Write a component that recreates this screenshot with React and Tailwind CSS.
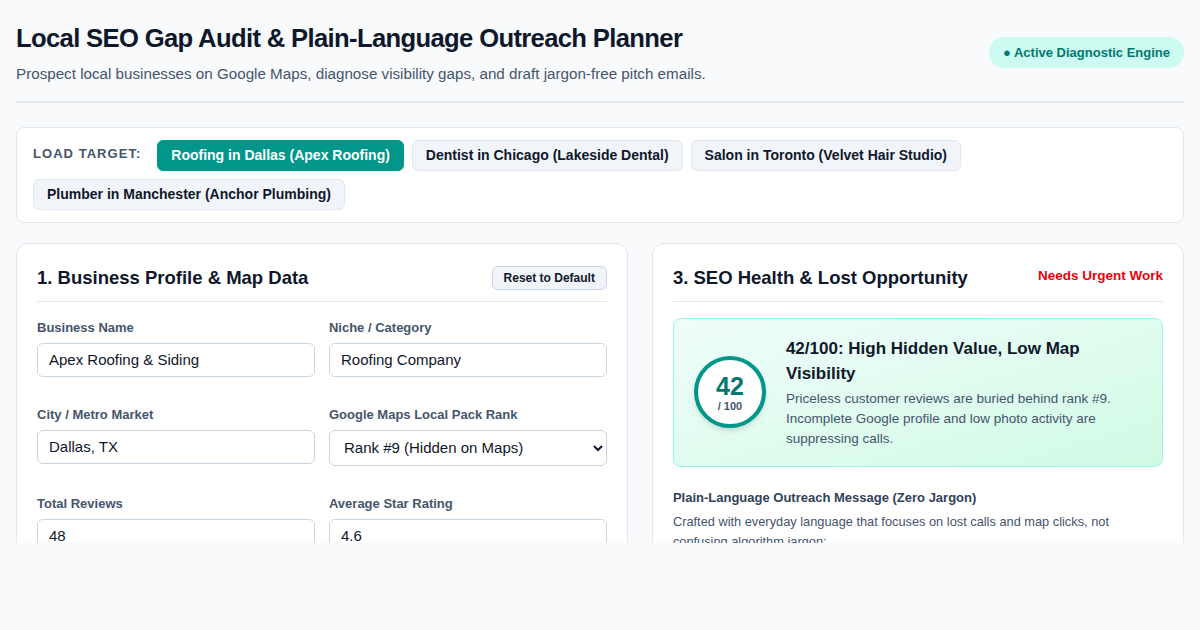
import React, { useState } from "react";

const targets = [
    "Roofing in Dallas (Apex Roofing)",
    "Dentist in Chicago (Lakeside Dental)",
    "Salon in Toronto (Velvet Hair Studio)",
    "Plumber in Manchester (Anchor Plumbing)",
];

const Field = ({ label, children }) => (
    <div className="flex flex-col">
        <label className="text-[13px] font-bold text-slate-600 mb-[7px] leading-4">{label}</label>
        {children}
    </div>
);

const inputCls = "h-[34px] border border-slate-300 rounded-md px-[11px] text-[15px] text-slate-900 bg-white outline-none";

const App = () => {
    const [activo, setActivo] = useState(0);

    return (
        <div className="min-h-[630px] bg-slate-50 font-['Liberation_Sans',Arial,sans-serif]">
            <div className="h-[543px] overflow-hidden px-4 pt-[22px]">
                <header className="flex items-center justify-between pb-[15px] border-b-2 border-slate-200">
                    <div>
                        <h1 className="text-[25.6px] leading-8 font-bold tracking-tight text-slate-900">
                            Local SEO Gap Audit &amp; Plain-Language Outreach Planner
                        </h1>
                        <p className="text-[15.2px] text-slate-600 mt-[9px]">
                            Prospect local businesses on Google Maps, diagnose visibility gaps, and draft jargon-free pitch emails.
                        </p>
                    </div>
                    <span className="bg-teal-100 text-teal-700 text-[13px] font-bold rounded-full px-[14px] h-[31px] flex items-center mb-[3px]">
                        ● Active Diagnostic Engine
                    </span>
                </header>

                <section className="mt-6 bg-white border border-slate-200 rounded-lg px-4 py-3 flex flex-wrap items-center gap-2">
                    <span className="text-[13px] font-bold uppercase tracking-[0.08em] text-slate-600 mr-2 -mt-[3px]">Load Target:</span>
                    {targets.map((t, i) => (
                        <button
                            key={t}
                            onClick={() => setActivo(i)}
                            className={
                                i === activo
                                    ? "h-[31px] px-[13px] rounded-md text-[14px] font-bold bg-teal-600 text-white border border-teal-600"
                                    : "h-[31px] px-[13px] rounded-md text-[14px] font-bold bg-slate-100 text-slate-900 border border-slate-200"
                            }
                        >
                            {t}
                        </button>
                    ))}
                </section>

                <div className="mt-5 grid grid-cols-[1.15fr_1fr] gap-6">
                    <div className="bg-white border border-slate-200 rounded-xl p-5 pb-8">
                        <div className="flex items-center justify-between pb-[9px] border-b border-slate-200">
                            <h2 className="text-[18.5px] font-bold text-slate-900 leading-7">1. Business Profile &amp; Map Data</h2>
                            <button className="h-6 px-[11px] bg-slate-100 border border-slate-300 rounded-md text-[12px] font-bold text-slate-900">
                                Reset to Default
                            </button>
                        </div>
                        <div className="grid grid-cols-2 gap-x-[14px] gap-y-[30px] mt-[18px]">
                            <Field label="Business Name">
                                <input className={inputCls} defaultValue="Apex Roofing & Siding" />
                            </Field>
                            <Field label="Niche / Category">
                                <input className={inputCls} defaultValue="Roofing Company" />
                            </Field>
                            <Field label="City / Metro Market">
                                <input className={inputCls} defaultValue="Dallas, TX" />
                            </Field>
                            <Field label="Google Maps Local Pack Rank">
                                <select className="h-[36px] border border-slate-300 rounded-md px-[10px] text-[15px] text-slate-900 bg-white" defaultValue="9">
                                    <option value="9">Rank #9 (Hidden on Maps)</option>
                                </select>
                            </Field>
                            <Field label="Total Reviews">
                                <input className={inputCls} defaultValue="48" />
                            </Field>
                            <Field label="Average Star Rating">
                                <input className={inputCls} defaultValue="4.6" />
                            </Field>
                        </div>
                    </div>

                    <div className="bg-white border border-slate-200 rounded-xl p-5">
                        <div className="flex items-center justify-between pb-[9px] border-b border-slate-200">
                            <h2 className="text-[18.5px] font-bold text-slate-900 leading-7">3. SEO Health &amp; Lost Opportunity</h2>
                            <span className="text-[13.5px] font-bold text-red-600 -mt-[4px]">Needs Urgent Work</span>
                        </div>

                        <div className="mt-4 rounded-lg border border-teal-200 bg-gradient-to-br from-teal-50 to-emerald-100 px-5 py-[17px] flex items-center gap-5">
                            <div className="w-[72px] h-[72px] shrink-0 rounded-full border-4 border-teal-600 bg-white shadow-md flex flex-col items-center justify-center">
                                <span className="text-[25px] font-bold text-teal-700 leading-7">42</span>
                                <span className="text-[11px] font-bold text-slate-600 leading-3">/ 100</span>
                            </div>
                            <div>
                                <h3 className="text-[17px] font-bold text-slate-900 leading-[25px]">
                                    42/100: High Hidden Value, Low Map Visibility
                                </h3>
                                <p className="text-[13.5px] text-slate-600 leading-5 mt-[3px]">
                                    Priceless customer reviews are buried behind rank #9. Incomplete Google profile and low photo activity are suppressing calls.
                                </p>
                            </div>
                        </div>

                        <h4 className="mt-[21px] text-[13px] font-bold text-slate-700">Plain-Language Outreach Message (Zero Jargon)</h4>
                        <p className="mt-[5px] text-[12.8px] text-slate-600 leading-5 pr-10">
                            Crafted with everyday language that focuses on lost calls and map clicks, not confusing algorithm jargon:
                        </p>
                    </div>
                </div>
            </div>
        </div>
    );
};

export default App;
